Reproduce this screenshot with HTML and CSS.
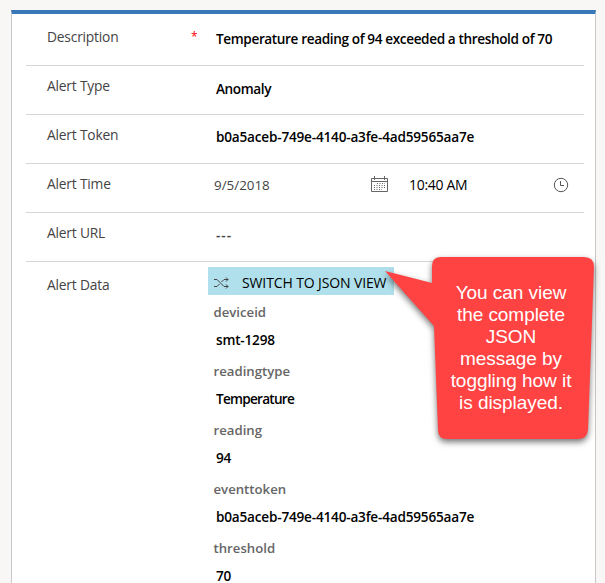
FILE: index.html
```html
<!DOCTYPE html>
<html lang="en">
<head>
<meta charset="utf-8">
<title>Alert</title>
<link rel="stylesheet" href="styles.css">
</head>
<body>
<main class="card">
  <div class="row"><span class="label">Description</span><span class="required">*</span><span class="value sentence">Temperature reading of 94 exceeded a threshold of 70</span></div>
  <div class="row"><span class="label">Alert Type</span><span class="value low">Anomaly</span></div>
  <div class="row"><span class="label">Alert Token</span><span class="value token">b0a5aceb-749e-4140-a3fe-4ad59565aa7e</span></div>
  <div class="row"><span class="label">Alert Time</span><span class="date">9/5/2018</span>
    <svg class="calendar" viewBox="0 0 17 16"><path d="M.5 2.500h16v13H.5zM.5 5.500h16M3.500 0v4M13.500 0v4"/><path class="dots" d="M6 7.500h8M3 9.500h11M3 11.500h11M3 13.500h8"/></svg>
    <span class="time">10:40 AM</span>
    <svg class="clock" viewBox="0 0 16 16"><circle cx="8" cy="8" r="6.700"/><path d="M7.500 4v4.500h3.500"/></svg>
  </div>
  <div class="row"><span class="label">Alert URL</span><span class="value empty">---</span></div>
  <div class="row data">
    <span class="label">Alert Data</span>
    <div class="panel">
      <div class="switch"><svg class="shuffle" viewBox="0 0 15 12"><path d="M0 2.500h3L10 9.500h4M0 9.500h3L5.500 7M7.500 5L10 2.500h4M12 .5l2 2-2 2M12 7.500l2 2-2 2"/></svg><span>SWITCH TO JSON VIEW</span></div>
      <dl>
        <dt>deviceid</dt><dd>smt-1298</dd>
        <dt>readingtype</dt><dd class="word">Temperature</dd>
        <dt>reading</dt><dd>94</dd>
        <dt>eventtoken</dt><dd class="token">b0a5aceb-749e-4140-a3fe-4ad59565aa7e</dd>
        <dt>threshold</dt><dd>70</dd>
      </dl>
    </div>
  </div>
</main>
<aside class="callout">
  <svg class="bubble" viewBox="0 0 225 205"><path d="M5 21L52 33V16Q52 7 61 7H204Q214 7 214 17L208 180Q207 189 198 189H67Q58 189 58 180L54 76Z"/></svg>
  <p>You can view<br>the complete<br>JSON<br>message by<br>toggling how it<br>is displayed.</p>
</aside>
</body>
</html>
```
FILE: styles.css
```css
* { box-sizing: border-box; }
body { margin: 0; height: 583px; overflow: hidden; position: relative; background: #f8f7f5; padding: 10px 9px 0 11px; font: 14px/20px "Open Sans", sans-serif; color: #444; }
.card { height: 573px; overflow: hidden; background: #fff; border: 1px solid #c8c8c8; border-top: 4px solid #3878b8; border-bottom: 0; padding: 3px 11px 0 14px; }
.row { display: flex; height: 49px; border-bottom: 1px solid #d6d6d6; padding: 10px 0 0 21px; }
.label { width: 145px; flex: none; font-size: 13.800px; letter-spacing: -.2px; }
.required { width: 25px; color: #f00; margin-left: -1px; font-size: 12px; }
.label + .value { margin-left: 24px; }
.value, dd { color: #000; font-weight: 600; font-size: 13.600px; letter-spacing: -.2px; white-space: nowrap; }
.value { padding-top: 2px; }
.required + .value { margin-left: 0; }
.value.sentence { letter-spacing: -.38px; }
.value.low { padding-top: 3px; letter-spacing: -.4px; }
.date { margin-left: 22px; width: 157px; padding-top: 1px; font-size: 13.400px; }
.calendar { width: 17px; height: 16px; margin-top: 2px; fill: none; stroke: #666; }
.calendar .dots { stroke-dasharray: 1 1.500; }
.time { width: 144px; margin-left: 21px; padding-top: 1px; color: #000; font-size: 14px; letter-spacing: -.3px; }
.clock { width: 16px; height: 16px; margin-top: 3px; fill: none; stroke: #555; }
.value.empty { color: #444; letter-spacing: 1px; }
.row.data { height: auto; border: 0; padding-top: 5px; }
.data .label { padding-top: 8px; }
.panel { margin-left: 16px; }
.switch { display: flex; align-items: center; width: 186px; height: 28px; padding: 3px 0 0 6px; background: #b0e0eb; color: #000; font-size: 14px; letter-spacing: -.12px; white-space: nowrap; }
.shuffle { width: 15px; height: 12px; margin-right: 13px; fill: none; stroke: #444; }
dl { margin: 0; padding: 7px 0 0 5.500px; }
dt { height: 28px; color: #666; font-size: 13.200px; font-weight: 600; }
dd { height: 31px; margin: 0 0 0 2.500px; padding-top: 3px; line-height: 14px; }
dd.word { letter-spacing: -.75px; }
.callout { position: absolute; left: 380px; top: 250px; width: 225px; height: 205px; }
.bubble { position: absolute; width: 225px; height: 205px; fill: #ff4343; filter: drop-shadow(0 3px 3px rgba(0,0,0,.55)); }
.callout p { position: absolute; left: 56px; top: 32px; width: 150px; margin: 0; color: #fff; text-align: center; font: 19px/22px "Liberation Sans", sans-serif; letter-spacing: -.05px; white-space: nowrap; }
```
